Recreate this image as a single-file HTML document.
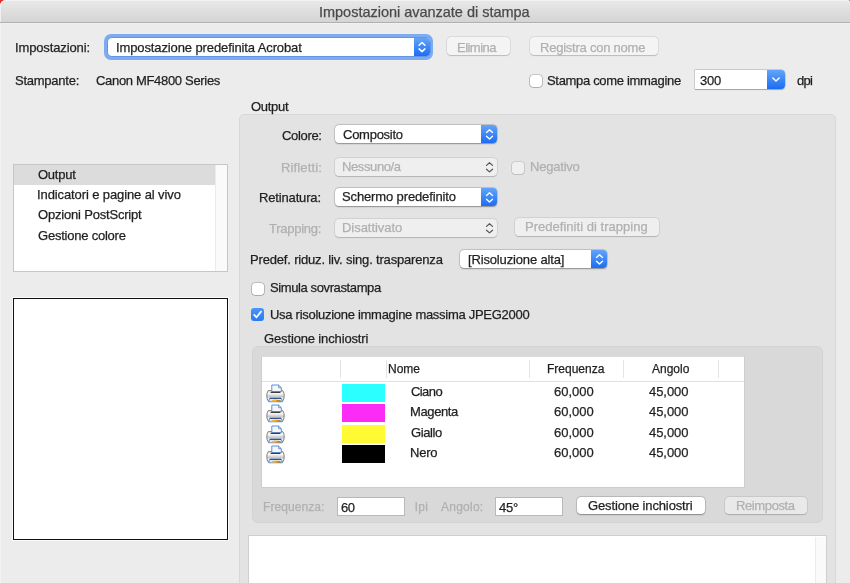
<!DOCTYPE html>
<html><head><meta charset="utf-8">
<style>
*{box-sizing:border-box;margin:0;padding:0}
html,body{width:850px;height:583px;overflow:hidden;background:#ececec}
body{position:relative;font-family:"Liberation Sans",sans-serif;font-size:13px;color:#262626}
.a{position:absolute}
.t{position:absolute;white-space:nowrap;font-size:13px;line-height:16px;color:#1f1f1f;will-change:transform;-webkit-text-stroke:0.25px currentColor}
.pop{position:absolute;background:#fff;border-radius:4px;box-shadow:0 0 0 0.5px rgba(0,0,0,0.2),0 0.5px 1.5px rgba(0,0,0,0.3)}
.arr{position:absolute;right:0;top:0;bottom:0;width:16px;border-radius:0 4px 4px 0;background:linear-gradient(#62a4f8,#1b6df5)}
.pop.d{background:rgba(255,255,255,0.42);box-shadow:0 0 0 0.5px rgba(0,0,0,0.12),0 0.5px 1px rgba(0,0,0,0.16)}
.btn{position:absolute;background:#fff;border-radius:4px;box-shadow:0 0 0 0.5px rgba(0,0,0,0.2),0 0.5px 1.5px rgba(0,0,0,0.3)}
.btn.d{background:rgba(255,255,255,0.42);box-shadow:0 0 0 0.5px rgba(0,0,0,0.12),0 0.5px 1px rgba(0,0,0,0.16)}
.cb{position:absolute;width:12px;height:12px;background:#fff;border-radius:3px;box-shadow:0 0 0 0.6px rgba(0,0,0,0.32),0 0.5px 0.5px rgba(0,0,0,0.2)}
.cb.d{background:rgba(255,255,255,0.45);box-shadow:0 0 0 0.6px rgba(0,0,0,0.2),0 0.5px 0.5px rgba(0,0,0,0.12)}
.sep{position:absolute;width:1px;height:18px;top:360px;background:#e4e4e4}
.sw{position:absolute;left:342px;width:43px;height:18px}
</style></head><body>
<div class="a" style="left:0;top:0;width:6px;height:6px;background:#e2312d"></div>
<div class="a" style="left:847px;top:0;width:3px;height:3px;background:#e07070"></div>
<div class="a" style="left:0;top:0;width:850px;height:23px;background:linear-gradient(#e9e9e9,#d4d4d4);border-bottom:1px solid #b0b0b0;border-radius:6px 3px 0 0;box-shadow:inset 0 1px 0 #f3f3f3, inset 1px 0 0 #f0f0f0"></div>

<!-- row1 -->
<div class="a" style="left:104px;top:34px;width:329px;height:26px;border-radius:7px;background:#7eabf0"></div>
<div class="a" style="left:108px;top:38px;width:322px;height:18px;border-radius:4px;background:#fff;box-shadow:0 0 0 0.5px #4a82e0"></div>
<div class="a" style="left:414px;top:38px;width:16px;height:18px;border-radius:0 4px 4px 0;background:linear-gradient(#62a4f8,#1b6df5)"></div>
<svg class="a" style="left:414px;top:38px" width="17" height="18"><path d="M5.1 7.2 L8 4.5 L10.9 7.2 M5.1 10.9 L8 13.6 L10.9 10.9" fill="none" stroke="#fff" stroke-width="1.5" stroke-linecap="round" stroke-linejoin="round"/></svg>
<div class="btn d" style="left:447px;top:37px;width:63px;height:18px"></div>
<div class="btn d" style="left:530px;top:37px;width:128px;height:18px"></div>

<!-- row2 -->
<div class="cb" style="left:529.5px;top:74.5px"></div>
<div class="a" style="left:695px;top:70px;width:90px;height:19px;border-radius:0 4px 4px 0;background:#fff;box-shadow:0 0 0 0.5px rgba(0,0,0,0.25),0 0.5px 1px rgba(0,0,0,0.2)"></div>
<div class="a" style="left:767px;top:70px;width:18px;height:19px;border-radius:0 4px 4px 0;background:linear-gradient(#62a4f8,#1b6df5)"></div>
<svg class="a" style="left:767px;top:70px" width="18" height="19"><path d="M5.8 8 L9 11 L12.2 8" fill="none" stroke="#fff" stroke-width="1.5" stroke-linecap="round" stroke-linejoin="round"/></svg>

<!-- list -->
<div class="a" style="left:13px;top:164px;width:215px;height:108px;background:#fff;border:1px solid #c6c6c6"></div>
<div class="a" style="left:14px;top:165px;width:201px;height:20px;background:#dcdcdc"></div>
<div class="a" style="left:215px;top:165px;width:12px;height:106px;background:#fafafa;border-left:1px solid #ebebeb"></div>

<!-- preview -->
<div class="a" style="left:12px;top:297px;width:217px;height:244px;border:1px solid #fafafa"></div>
<div class="a" style="left:13px;top:298px;width:215px;height:242px;background:#fff;border:1px solid #111"></div>
<div class="a" style="left:0;top:23px;width:1px;height:560px;background:#f3f3f3"></div>
<div class="a" style="left:0;top:23px;width:850px;height:1px;background:#f1f1f1"></div>

<!-- group -->
<div class="a" style="left:239px;top:114px;width:597px;height:480px;background:#e3e3e3;border:1px solid #d8d8d8;border-radius:5px"></div>

<div class="pop" style="left:335px;top:125px;width:162px;height:18px"><div class="arr"></div></div>
<div class="pop d" style="left:335px;top:157.5px;width:162px;height:18px"></div>
<div class="cb d" style="left:512.3px;top:161.5px;width:12px;height:12px"></div>
<div class="pop" style="left:335px;top:187.5px;width:162px;height:18px"><div class="arr"></div></div>
<div class="pop d" style="left:335px;top:219px;width:162px;height:18px"></div>
<div class="btn d" style="left:514.5px;top:217.5px;width:144.5px;height:18px"></div>
<div class="pop" style="left:459.5px;top:249.5px;width:147.5px;height:18.5px"><div class="arr"></div></div>
<svg class="a" style="left:481px;top:125px" width="16" height="19"><path d="M5.5 7.4 L8.5 4.7 L11.5 7.4 M5.5 11.2 L8.5 13.9 L11.5 11.2" fill="none" stroke="#fff" stroke-width="1.4" stroke-linecap="round" stroke-linejoin="round"/></svg>
<svg class="a" style="left:481px;top:187.5px" width="16" height="19"><path d="M5.5 7.4 L8.5 4.7 L11.5 7.4 M5.5 11.2 L8.5 13.9 L11.5 11.2" fill="none" stroke="#fff" stroke-width="1.4" stroke-linecap="round" stroke-linejoin="round"/></svg>
<svg class="a" style="left:591px;top:249.5px" width="16" height="19"><path d="M5.5 7.4 L8.5 4.7 L11.5 7.4 M5.5 11.2 L8.5 13.9 L11.5 11.2" fill="none" stroke="#fff" stroke-width="1.4" stroke-linecap="round" stroke-linejoin="round"/></svg>
<svg class="a" style="left:481px;top:157.5px" width="16" height="19"><path d="M5.5 7.4 L8.5 4.7 L11.5 7.4 M5.5 11.2 L8.5 13.9 L11.5 11.2" fill="none" stroke="#555" stroke-width="1.2" stroke-linecap="round" stroke-linejoin="round"/></svg>
<svg class="a" style="left:481px;top:219px" width="16" height="19"><path d="M5.5 7.4 L8.5 4.7 L11.5 7.4 M5.5 11.2 L8.5 13.9 L11.5 11.2" fill="none" stroke="#555" stroke-width="1.2" stroke-linecap="round" stroke-linejoin="round"/></svg>

<div class="cb" style="left:252px;top:283.3px"></div>
<div class="a" style="left:251.4px;top:308.3px;width:12.6px;height:12.6px;border-radius:3px;background:linear-gradient(#4d94f8,#2a7af5)"></div>
<svg class="a" style="left:251.2px;top:308px" width="13" height="13"><path d="M3.2 6.8 L5.5 9.3 L10 3.6" fill="none" stroke="#fff" stroke-width="1.7" stroke-linecap="round" stroke-linejoin="round"/></svg>

<!-- inner group -->
<div class="a" style="left:252px;top:346px;width:571px;height:176.5px;background:#d9d9d9;border:1px solid #d3d3d3;border-radius:6px"></div>
<div class="a" style="left:261px;top:356px;width:484px;height:131.5px;background:#fff;border:1px solid #cdcdcd;border-top-color:#dadada"></div>
<div class="a" style="left:262px;top:381px;width:482px;height:1px;background:#e0e0e0"></div>
<div class="sep" style="left:340px"></div>
<div class="sep" style="left:386px"></div>
<div class="sep" style="left:529px"></div>
<div class="sep" style="left:623px"></div>
<div class="sep" style="left:718px"></div>
<div class="sw" style="top:384px;background:#2cffff"></div>
<div class="sw" style="top:404px;background:#fc2cf6"></div>
<div class="sw" style="top:424.5px;background:#fffa33"></div>
<div class="sw" style="top:444.5px;background:#000"></div>

<div class="a" style="left:336.5px;top:497px;width:68.5px;height:18.5px;background:#fff;border:1px solid #b8b8b8"></div>
<div class="a" style="left:495px;top:497px;width:67.5px;height:18.5px;background:#fff;border:1px solid #b8b8b8"></div>
<div class="btn" style="left:577px;top:496.5px;width:128px;height:17.5px"></div>
<div class="btn d" style="left:724.5px;top:496.5px;width:82.5px;height:17.5px"></div>

<!-- icons -->
<svg width="0" height="0" style="position:absolute"><defs><linearGradient id="pg" x1="0" y1="0" x2="0" y2="1"><stop offset="0" stop-color="#e0e0e0"/><stop offset="0.25" stop-color="#fafafa"/><stop offset="0.55" stop-color="#c9c9c9"/><stop offset="0.75" stop-color="#f0f0f0"/><stop offset="1" stop-color="#c0c0c0"/></linearGradient></defs></svg>
<svg class="a" style="left:265.5px;top:383.8px" width="19" height="19" viewBox="0 0 19 19">
<path d="M2.2 6.6 H16.8 Q18.4 9 18.2 12 Q18.2 15.5 16.6 17.2 H2.4 Q0.8 15.5 0.8 12 Q0.6 9 2.2 6.6 Z" fill="url(#pg)" stroke="#777" stroke-width="0.9"/>
<path d="M5.8 1 H12.6 L15.3 3.7 V7.6 H5.8 Z" fill="#f4f6fa" stroke="#4f86d4" stroke-width="0.9"/>
<path d="M12.6 1 V3.7 H15.3" fill="none" stroke="#4f86d4" stroke-width="0.8"/>
<path d="M4.6 8.4 H14.4" stroke="#3d3d3d" stroke-width="1.2"/>
<path d="M3.8 14.2 H15.2 L16.4 17.8 H2.6 Z" fill="#dfe9f7" stroke="#5585cf" stroke-width="0.8"/>
<path d="M3.9 14.3 H15.1" stroke="#1f3f7a" stroke-width="1"/>
<path d="M4.4 17.5 Q7 15.3 9.5 15.6 Q12 15.8 14.8 17.5 Z" fill="#f0b72c"/>
<path d="M9.5 17.5 Q11 15.6 13 16 L14.8 17.5 Z" fill="#e06a1a"/>
<path d="M12.8 17.5 L14 15.9 L15.6 17.5 Z" fill="#3f9a3f"/>
</svg>
<svg class="a" style="left:265.5px;top:404.25px" width="19" height="19" viewBox="0 0 19 19">
<path d="M2.2 6.6 H16.8 Q18.4 9 18.2 12 Q18.2 15.5 16.6 17.2 H2.4 Q0.8 15.5 0.8 12 Q0.6 9 2.2 6.6 Z" fill="url(#pg)" stroke="#777" stroke-width="0.9"/>
<path d="M5.8 1 H12.6 L15.3 3.7 V7.6 H5.8 Z" fill="#f4f6fa" stroke="#4f86d4" stroke-width="0.9"/>
<path d="M12.6 1 V3.7 H15.3" fill="none" stroke="#4f86d4" stroke-width="0.8"/>
<path d="M4.6 8.4 H14.4" stroke="#3d3d3d" stroke-width="1.2"/>
<path d="M3.8 14.2 H15.2 L16.4 17.8 H2.6 Z" fill="#dfe9f7" stroke="#5585cf" stroke-width="0.8"/>
<path d="M3.9 14.3 H15.1" stroke="#1f3f7a" stroke-width="1"/>
<path d="M4.4 17.5 Q7 15.3 9.5 15.6 Q12 15.8 14.8 17.5 Z" fill="#f0b72c"/>
<path d="M9.5 17.5 Q11 15.6 13 16 L14.8 17.5 Z" fill="#e06a1a"/>
<path d="M12.8 17.5 L14 15.9 L15.6 17.5 Z" fill="#3f9a3f"/>
</svg>
<svg class="a" style="left:265.5px;top:424.7px" width="19" height="19" viewBox="0 0 19 19">
<path d="M2.2 6.6 H16.8 Q18.4 9 18.2 12 Q18.2 15.5 16.6 17.2 H2.4 Q0.8 15.5 0.8 12 Q0.6 9 2.2 6.6 Z" fill="url(#pg)" stroke="#777" stroke-width="0.9"/>
<path d="M5.8 1 H12.6 L15.3 3.7 V7.6 H5.8 Z" fill="#f4f6fa" stroke="#4f86d4" stroke-width="0.9"/>
<path d="M12.6 1 V3.7 H15.3" fill="none" stroke="#4f86d4" stroke-width="0.8"/>
<path d="M4.6 8.4 H14.4" stroke="#3d3d3d" stroke-width="1.2"/>
<path d="M3.8 14.2 H15.2 L16.4 17.8 H2.6 Z" fill="#dfe9f7" stroke="#5585cf" stroke-width="0.8"/>
<path d="M3.9 14.3 H15.1" stroke="#1f3f7a" stroke-width="1"/>
<path d="M4.4 17.5 Q7 15.3 9.5 15.6 Q12 15.8 14.8 17.5 Z" fill="#f0b72c"/>
<path d="M9.5 17.5 Q11 15.6 13 16 L14.8 17.5 Z" fill="#e06a1a"/>
<path d="M12.8 17.5 L14 15.9 L15.6 17.5 Z" fill="#3f9a3f"/>
</svg>
<svg class="a" style="left:265.5px;top:445.15px" width="19" height="19" viewBox="0 0 19 19">
<path d="M2.2 6.6 H16.8 Q18.4 9 18.2 12 Q18.2 15.5 16.6 17.2 H2.4 Q0.8 15.5 0.8 12 Q0.6 9 2.2 6.6 Z" fill="url(#pg)" stroke="#777" stroke-width="0.9"/>
<path d="M5.8 1 H12.6 L15.3 3.7 V7.6 H5.8 Z" fill="#f4f6fa" stroke="#4f86d4" stroke-width="0.9"/>
<path d="M12.6 1 V3.7 H15.3" fill="none" stroke="#4f86d4" stroke-width="0.8"/>
<path d="M4.6 8.4 H14.4" stroke="#3d3d3d" stroke-width="1.2"/>
<path d="M3.8 14.2 H15.2 L16.4 17.8 H2.6 Z" fill="#dfe9f7" stroke="#5585cf" stroke-width="0.8"/>
<path d="M3.9 14.3 H15.1" stroke="#1f3f7a" stroke-width="1"/>
<path d="M4.4 17.5 Q7 15.3 9.5 15.6 Q12 15.8 14.8 17.5 Z" fill="#f0b72c"/>
<path d="M9.5 17.5 Q11 15.6 13 16 L14.8 17.5 Z" fill="#e06a1a"/>
<path d="M12.8 17.5 L14 15.9 L15.6 17.5 Z" fill="#3f9a3f"/>
</svg>
<!-- /icons -->
<!-- bottom box -->
<div class="a" style="left:248px;top:535px;width:578.5px;height:60px;background:#fff;border:1px solid #cfcfcf"></div>
<div class="a" style="left:814.5px;top:536.5px;width:11px;height:60px;background:#fafafa;border-left:1px solid #ececec"></div>
<div class="t" style="left:318.90px;top:3px;font-size:14.5px;line-height:18px;color:#4a4a4a;letter-spacing:-0.017px">Impostazioni avanzate di stampa</div>
<div class="t" style="left:14.80px;top:40px;letter-spacing:-0.132px">Impostazioni:</div>
<div class="t" style="left:115.60px;top:40px;letter-spacing:-0.114px">Impostazione predefinita Acrobat</div>
<div class="t" style="left:457.40px;top:40px;color:#b0b0b0;letter-spacing:-0.532px">Elimina</div>
<div class="t" style="left:539.90px;top:40px;color:#b0b0b0;letter-spacing:-0.230px">Registra con nome</div>
<div class="t" style="left:14.50px;top:73px;letter-spacing:-0.242px">Stampante:</div>
<div class="t" style="left:96.20px;top:73px;letter-spacing:-0.321px">Canon MF4800 Series</div>
<div class="t" style="left:547.30px;top:73px;letter-spacing:-0.318px">Stampa come immagine</div>
<div class="t" style="left:700.40px;top:73px;letter-spacing:-0.230px">300</div>
<div class="t" style="left:797.00px;top:73px;letter-spacing:-0.730px">dpi</div>
<div class="t" style="left:251.20px;top:99px;letter-spacing:-0.283px">Output</div>
<div class="t" style="left:37.90px;top:167px;letter-spacing:-0.243px">Output</div>
<div class="t" style="left:36.90px;top:187px;letter-spacing:-0.107px">Indicatori e pagine al vivo</div>
<div class="t" style="left:37.90px;top:207px;letter-spacing:-0.189px">Opzioni PostScript</div>
<div class="t" style="left:37.90px;top:228px;letter-spacing:-0.223px">Gestione colore</div>
<div class="t" style="left:281.50px;top:128px;letter-spacing:-0.333px">Colore:</div>
<div class="t" style="left:343.30px;top:127px;letter-spacing:-0.263px">Composito</div>
<div class="t" style="left:280.50px;top:160px;color:#b0b0b0;letter-spacing:0.148px">Rifletti:</div>
<div class="t" style="left:342.30px;top:159px;color:#b0b0b0;letter-spacing:-0.390px">Nessuno/a</div>
<div class="t" style="left:529.80px;top:159px;color:#b0b0b0;letter-spacing:-0.211px">Negativo</div>
<div class="t" style="left:259.40px;top:190px;letter-spacing:-0.158px">Retinatura:</div>
<div class="t" style="left:342.00px;top:189px;letter-spacing:-0.128px">Schermo predefinito</div>
<div class="t" style="left:269.10px;top:221px;color:#b0b0b0;letter-spacing:-0.266px">Trapping:</div>
<div class="t" style="left:342.30px;top:220px;color:#b0b0b0;letter-spacing:-0.036px">Disattivato</div>
<div class="t" style="left:525.00px;top:219px;color:#b0b0b0;letter-spacing:0.023px">Predefiniti di trapping</div>
<div class="t" style="left:250.20px;top:252px;letter-spacing:-0.174px">Predef. riduz. liv. sing. trasparenza</div>
<div class="t" style="left:468.10px;top:252px;letter-spacing:-0.152px">[Risoluzione alta]</div>
<div class="t" style="left:269.90px;top:280px;letter-spacing:-0.390px">Simula sovrastampa</div>
<div class="t" style="left:269.60px;top:307px;letter-spacing:-0.283px">Usa risoluzione immagine massima JPEG2000</div>
<div class="t" style="left:264.20px;top:331px;letter-spacing:-0.142px">Gestione inchiostri</div>
<div class="t" style="left:388.30px;top:361px;font-size:12px;line-height:16px">Nome</div>
<div class="t" style="left:546.80px;top:361px;font-size:12px;line-height:16px">Frequenza</div>
<div class="t" style="left:652.00px;top:361px;font-size:12px;line-height:16px">Angolo</div>
<div class="t" style="left:410.90px;top:384px;letter-spacing:-0.584px">Ciano</div>
<div class="t" style="left:553.50px;top:384px;letter-spacing:-0.006px">60,000</div>
<div class="t" style="left:648.70px;top:384px;letter-spacing:-0.046px">45,000</div>
<div class="t" style="left:409.90px;top:404px;letter-spacing:-0.377px">Magenta</div>
<div class="t" style="left:553.50px;top:404px;letter-spacing:-0.006px">60,000</div>
<div class="t" style="left:648.70px;top:404px;letter-spacing:-0.046px">45,000</div>
<div class="t" style="left:410.90px;top:425px;letter-spacing:-0.421px">Giallo</div>
<div class="t" style="left:553.50px;top:425px;letter-spacing:-0.006px">60,000</div>
<div class="t" style="left:648.70px;top:425px;letter-spacing:-0.046px">45,000</div>
<div class="t" style="left:409.90px;top:445px;letter-spacing:-0.216px">Nero</div>
<div class="t" style="left:553.50px;top:445px;letter-spacing:-0.006px">60,000</div>
<div class="t" style="left:648.70px;top:445px;letter-spacing:-0.046px">45,000</div>
<div class="t" style="left:262.70px;top:499px;font-size:12px;line-height:16px;color:#b0b0b0;letter-spacing:0.070px">Frequenza:</div>
<div class="t" style="left:341.20px;top:500px;letter-spacing:-0.430px">60</div>
<div class="t" style="left:415.30px;top:499px;font-size:12px;line-height:16px;color:#b0b0b0;letter-spacing:0.480px">lpi</div>
<div class="t" style="left:441.20px;top:499px;font-size:12px;line-height:16px;color:#b0b0b0;letter-spacing:0.239px">Angolo:</div>
<div class="t" style="left:499.10px;top:500px;letter-spacing:-0.180px">45°</div>
<div class="t" style="left:588.00px;top:498px;letter-spacing:-0.125px">Gestione inchiostri</div>
<div class="t" style="left:735.80px;top:498px;color:#b0b0b0;letter-spacing:-0.388px">Reimposta</div>
</body></html>
